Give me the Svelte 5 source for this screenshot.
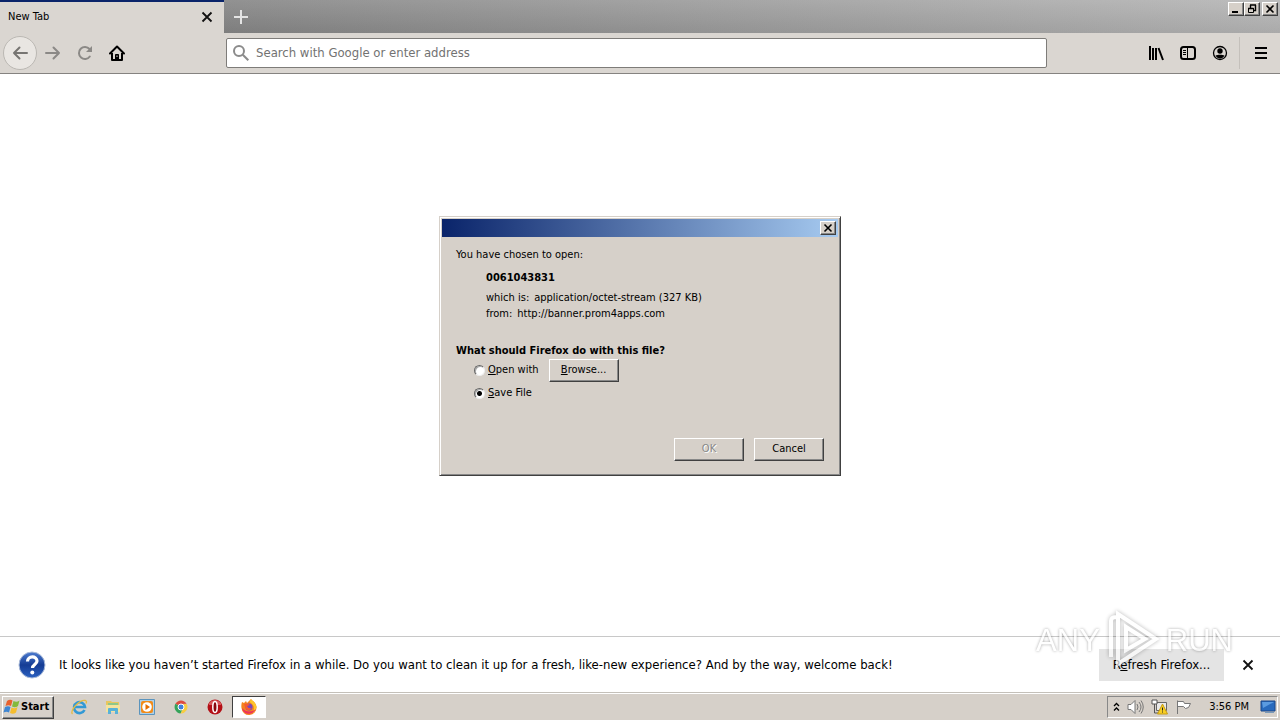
<script lang="ts">
	let address = $state('');
	let choice = $state('save');

	const message =
		'It looks like you haven’t started Firefox in a while. Do you want to clean it up for a fresh, like-new experience? And by the way, welcome back!';
</script>

{#snippet cross(size: number)}
	<svg width={size} height={size} viewBox="0 0 12 12" aria-hidden="true">
		<path d="M1.5 1.5l9 9m0-9l-9 9" fill="none" stroke="#111" stroke-width="1.8" />
	</svg>
{/snippet}

<div class="desktop">
	<div class="browser">
		<header class="tabs">
			<div class="tab">
				<span>New Tab</span>
				<button class="plain" type="button" aria-label="Close tab">{@render cross(12)}</button>
			</div>
			<button class="plain new-tab" type="button" aria-label="New tab">
				<svg width="14" height="14" viewBox="0 0 14 14">
					<path d="M7 0v14M0 7h14" stroke="#e4e4e4" stroke-width="2" />
				</svg>
			</button>
			<div class="window-buttons">
				<button class="caption" type="button" aria-label="Minimize">
					<svg width="10" height="10" viewBox="0 0 10 10"><path d="M1 8h6" stroke="#000" stroke-width="2" /></svg>
				</button>
				<button class="caption" type="button" aria-label="Restore">
					<svg width="10" height="10" viewBox="0 0 10 10" fill="none" stroke="#000">
						<path d="M3 1h6M3.500 1v3M8.500 1v5.500H6.500M1 4.500h5.500" stroke-width="1.4" />
						<path d="M1.500 4v4.500h5V4" />
					</svg>
				</button>
				<button class="caption last" type="button" aria-label="Close">
					<svg width="10" height="10" viewBox="0 0 10 10"><path d="M1.500 1.500l7 7m0-7l-7 7" stroke="#000" stroke-width="1.6" /></svg>
				</button>
			</div>
		</header>

		<nav class="toolbar">
			<div class="nav-group">
				<button class="plain back" type="button" aria-label="Back">
					<svg width="16" height="16" viewBox="0 0 16 16" fill="none" stroke="#777572" stroke-width="2">
						<path d="M15 8H2M7.500 2.500L2 8l5.500 5.500" stroke-linejoin="round" stroke-linecap="round" />
					</svg>
				</button>
				<button class="plain tool" type="button" aria-label="Forward">
					<svg width="16" height="16" viewBox="0 0 16 16" fill="none" stroke="#8b8986" stroke-width="2">
						<path d="M1 8h13M8.500 2.500L14 8l-5.500 5.500" stroke-linejoin="round" stroke-linecap="round" />
					</svg>
				</button>
				<button class="plain tool" type="button" aria-label="Reload">
					<svg width="16" height="16" viewBox="0 0 16 16" fill="none" stroke="#8b8986" stroke-width="2">
						<path d="M12.800 11.500A6 6 0 1 1 12.500 4" stroke-linecap="round" />
						<path d="M15 1v6H9z" fill="#8b8986" stroke="none" />
					</svg>
				</button>
				<button class="plain tool" type="button" aria-label="Home">
					<svg width="16" height="16" viewBox="0 0 16 16" fill="none" stroke="#000" stroke-width="2">
						<path d="M1 8.500L8 1.500l7 7" stroke-linejoin="round" stroke-linecap="round" />
						<path d="M3 8v7h10V8" stroke-linejoin="round" />
						<path d="M6.500 15V9.500h3V15" fill="#000" stroke-width="1" />
						<path d="M8 10.500v1.500" stroke="#dad6d1" stroke-width="1" />
					</svg>
				</button>
			</div>
			<label class="address">
				<svg width="16" height="16" viewBox="0 0 16 16" fill="none" stroke="#8b8b8b" stroke-width="2">
					<circle cx="6" cy="6" r="5" />
					<path d="M9.800 9.800l5.500 5.500" />
				</svg>
				<input
					type="text"
					aria-label="Address"
					placeholder="Search with Google or enter address"
					bind:value={address}
				/>
			</label>
			<div class="tools">
				<button class="plain tool" type="button" aria-label="Library">
					<svg width="16" height="16" viewBox="0 0 16 16" stroke="#000" stroke-width="2">
						<path d="M2 1v14M5 3v12M8 3v12M10.500 3l4.500 12" />
					</svg>
				</button>
				<button class="plain tool" type="button" aria-label="Sidebars">
					<svg width="16" height="16" viewBox="0 0 16 16" fill="none" stroke="#000">
						<rect x="1" y="2" width="14" height="12" rx="2.500" stroke-width="2" />
						<path d="M7.500 2v12M3 5.500h3M3 7.500h3M3 9.500h3" />
					</svg>
				</button>
				<button class="plain tool" type="button" aria-label="Account">
					<svg width="16" height="16" viewBox="0 0 16 16">
						<circle cx="8" cy="8" r="6.500" fill="none" stroke="#000" stroke-width="1.300" />
						<circle cx="8" cy="6" r="2.700" />
						<path d="M3.500 10.500c2-1 7-1 9 0-1 2-2.500 3-4.500 3s-3.500-1-4.500-3z" />
					</svg>
				</button>
				<button class="plain tool menu" type="button" aria-label="Open menu">
					<svg width="12" height="12" viewBox="0 0 12 12" stroke="#000" stroke-width="2">
						<path d="M0 1h12M0 6h12M0 11h12" />
					</svg>
				</button>
			</div>
		</nav>

		<main class="page"></main>

		<div class="notice">
			<svg width="28" height="28" viewBox="0 0 28 28" aria-hidden="true">
				<defs>
					<linearGradient id="help" x1="0" y1="0" x2="0" y2="1">
						<stop offset="0" stop-color="#4d7cd0" />
						<stop offset="0.500" stop-color="#153c94" />
						<stop offset="1" stop-color="#2c62c2" />
					</linearGradient>
				</defs>
				<circle cx="14" cy="14" r="13" fill="url(#help)" stroke="#a9bad8" />
				<path d="M9.500 10.500c0-6 9.500-6 9.500-.5 0 3.500-4.500 3.500-4.500 7" fill="none" stroke="#fff" stroke-width="3.200" />
				<circle cx="14.300" cy="21.500" r="2" fill="#fff" />
			</svg>
			<p>{message}</p>
			<button class="refresh" type="button">R<u>e</u>fresh Firefox...</button>
			<button class="plain dismiss" type="button" aria-label="Close message">{@render cross(12)}</button>
		</div>

		<div class="dialog-layer">
			<div class="dialog" role="dialog" aria-label="Opening 0061043831">
				<div class="titlebar">
					<button class="caption" type="button" aria-label="Close dialog">
						<svg width="10" height="10" viewBox="0 0 10 10"><path d="M1.500 1.500l7 7m0-7l-7 7" stroke="#000" stroke-width="1.6" /></svg>
					</button>
				</div>
				<form class="dialog-body" onsubmit={(e) => e.preventDefault()}>
					<p>You have chosen to open:</p>
					<div class="file">
						<strong>0061043831</strong>
						<div class="detail"><span>which is:</span><span>application/octet-stream (327 KB)</span></div>
						<div class="detail"><span>from:</span><span>http://banner.prom4apps.com</span></div>
					</div>
					<strong>What should Firefox do with this file?</strong>
					<div class="choices">
						<div class="choice">
							<label><input type="radio" name="action" value="open" bind:group={choice} /><span><u>O</u>pen with</span></label>
							<button class="push" type="button"><u>B</u>rowse...</button>
						</div>
						<div class="choice">
							<label><input type="radio" name="action" value="save" bind:group={choice} /><span><u>S</u>ave File</span></label>
						</div>
					</div>
					<div class="actions">
						<button class="push" type="submit" disabled>OK</button>
						<button class="push" type="button">Cancel</button>
					</div>
				</form>
			</div>
		</div>
	</div>

	<footer class="taskbar">
		<button class="start" type="button">
			<svg width="18" height="16" viewBox="0 0 18 16" aria-hidden="true">
				<path d="M4 2c2-1.500 4-1.500 5.500-.5L8 7C6.500 6 4.500 6 2.500 7z" fill="#e8602c" />
				<path d="M10.500 2c2 1 4 1 6-.5L15 7c-2 1.500-4 1.500-6 .5z" fill="#83b93c" />
				<path d="M2 8c2-1 4-1 5.500 0L6 13.500c-1.500-1-3.500-1-5.500 0z" fill="#3f86d2" />
				<path d="M8.500 8.500c2 1 4 1 6-.5L13 13.500c-2 1.500-4 1.500-6 .5z" fill="#f5bd2e" />
			</svg>
			<span>Start</span>
		</button>
		<div class="launchers">
			<button class="plain launcher" type="button" aria-label="Internet Explorer">
				<svg width="18" height="18" viewBox="0 0 18 18" fill="none">
					<path d="M14.500 12A5.500 5.500 0 1 1 15 9H5" stroke="#3299d5" stroke-width="2.600" />
					<path d="M2.500 16C-1 13 10 1 15.500 2.500c1.500.5 1 2 .5 3" stroke="#e4bb43" stroke-width="1.300" />
				</svg>
			</button>
			<button class="plain launcher" type="button" aria-label="Windows Explorer">
				<svg width="18" height="18" viewBox="0 0 18 18">
					<path d="M2 3h5l1 1h7v10H2z" fill="#e8c65f" />
					<path d="M4 5h10v3H4z" fill="#8fc789" />
					<path d="M2 7h14v7H2z" fill="#f5e39d" />
					<path d="M4 16v-5q0-1 1-1h8q1 0 1 1v5h-3v-3H7v3z" fill="#59b2d8" />
				</svg>
			</button>
			<button class="plain launcher" type="button" aria-label="Media Player">
				<svg width="18" height="18" viewBox="0 0 18 18">
					<path d="M1.500 1.500h15v15h-15z" fill="#aed0e8" stroke="#5b94bd" />
					<rect x="3" y="3" width="12" height="12" rx="2" fill="#f28b19" />
					<circle cx="9" cy="9" r="4.800" fill="#fff" />
					<path d="M7.500 6l4.500 3-4.500 3z" fill="#e66d00" />
				</svg>
			</button>
			<button class="plain launcher" type="button" aria-label="Chrome">
				<svg width="18" height="18" viewBox="0 0 18 18">
					<path d="M9 9L3.400 5.800A6.500 6.500 0 0 1 14.600 5.800L9 6z" fill="#dd4b3e" />
					<path d="M9 9L3.400 5.800A6.500 6.500 0 0 0 8.500 15.500L11.500 10z" fill="#35a35a" />
					<path d="M9 6h5.700A6.500 6.500 0 0 1 8.500 15.500L12 9z" fill="#f7cd42" />
					<circle cx="9" cy="9" r="3" fill="#3f80dc" stroke="#fff" />
				</svg>
			</button>
			<button class="plain launcher" type="button" aria-label="Opera">
				<svg width="18" height="18" viewBox="0 0 18 18">
					<circle cx="9" cy="9" r="7.500" fill="#b40f16" />
					<path d="M3 5q6-6 12 0v2H3z" fill="#d9575a" />
					<ellipse cx="9" cy="9" rx="2.200" ry="5.500" fill="#8a070d" stroke="#fff" stroke-width="1.500" />
				</svg>
			</button>
			<button class="plain launcher active" type="button" aria-label="Firefox">
				<svg width="18" height="18" viewBox="0 0 18 18">
					<path d="M2 4l2 1 2-2 1 2 4-4c1 2 5 3 5.500 8A7.500 7.500 0 0 1 1.500 10Q1 7 2 4z" fill="#f58220" />
					<path d="M11 1c1 2 5 3 5.500 8-.5 3-2 5-4 6 3-5 1-9-3-11z" fill="#fdc52c" />
					<path d="M2 10c1 7 11 8 14 1-3 3-10 4-14-1z" fill="#ed345b" />
					<circle cx="9" cy="9" r="3.500" fill="#7948bd" />
					<path d="M4 6q4-1 6 1l-3 1q1 3 5 2-3 4-6 1z" fill="#f75b30" />
				</svg>
			</button>
		</div>
		<div class="tray">
			<svg width="7" height="10" viewBox="0 0 7 10" fill="none" stroke="#000" stroke-width="1.300">
				<path d="M1 4l2.500-2.500L6 4M1 8.500L3.500 6 6 8.500" />
			</svg>
			<svg width="17" height="16" viewBox="0 0 17 16" fill="none" stroke="#777" stroke-width="1">
				<path d="M1 5.500h3l4-4v13l-4-4H1z" fill="#fff" />
				<path d="M10 5q2 3 0 6M12 3q4 5 0 10M14 1.500q4.500 6.500 0 13" />
			</svg>
			<svg width="17" height="16" viewBox="0 0 17 16">
				<path d="M5.500 3.500h10v8h-10z" fill="#e9e9e9" stroke="#666" />
				<path d="M1 1h5v4H1z" fill="#fff" stroke="#555" />
				<path d="M3.500 5v9h5" fill="none" stroke="#555" />
				<path d="M11.500 5l5 10h-10z" fill="#f9cf22" stroke="#c69b12" />
				<path d="M11.500 8.500v3M11.500 12.500v1" stroke="#222" />
			</svg>
			<svg width="17" height="16" viewBox="0 0 17 16" fill="#fff" stroke="#777">
				<path d="M2.500 15V1.500M2.500 2.500h6l1 2h6l-2 4-3 1-2-2h-6z" />
			</svg>
			<time>3:56 PM</time>
			<svg width="16" height="14" viewBox="0 0 16 14">
				<path d="M1 1h14v10H1z" fill="#286abd" stroke="#1a4688" />
				<path d="M2 2h12L3 8z" fill="#5b9be0" />
				<path d="M5 12h9v1H5z" fill="#7b9ab9" />
			</svg>
		</div>
	</footer>

	<div class="watermark" aria-hidden="true">
		<span>ANY</span>
		<svg width="54" height="62" viewBox="0 0 54 62" fill="none" stroke="#fff" stroke-width="4">
			<path d="M5 47V11q0-4 5-4M12 54V4l38 25z" />
			<path d="M20 40V17l19 12z" />
		</svg>
		<span>RUN</span>
	</div>
</div>

<style>
	:global(body) {
		margin: 0;
	}

	.desktop {
		--face: #d6d0c9;
		position: relative;
		display: flex;
		flex-direction: column;
		height: 100vh;
		overflow: hidden;
		background: #fff;
		color: #000;
		font: 11px/16px Tahoma, 'DejaVu Sans Condensed', 'DejaVu Sans', sans-serif;
	}

	button,
	input {
		box-sizing: border-box;
		color: inherit;
		font: inherit;
	}

	p {
		margin: 0;
	}

	svg {
		display: block;
		flex: none;
	}

	.plain {
		display: grid;
		place-items: center;
		border: 0;
		background: none;
		padding: 0;
	}

	.browser {
		position: relative;
		display: flex;
		flex: 1;
		flex-direction: column;
		min-height: 0;
	}

	.tabs {
		display: flex;
		height: 33px;
		background: linear-gradient(rgba(255, 255, 255, 0.1), rgba(0, 0, 0, 0.06)),
			linear-gradient(90deg, #858585 17%, #b5b5b5);
	}

	.tab {
		box-sizing: border-box;
		display: flex;
		align-items: center;
		justify-content: space-between;
		width: 224px;
		border-top: 2px solid #0a246a;
		background: #dad6d1;
		padding: 0 11px 2px 8px;
	}

	.new-tab {
		width: 34px;
	}

	.window-buttons {
		display: flex;
		margin: 2px 2px 0 auto;
	}

	.caption {
		display: grid;
		place-items: center;
		width: 16px;
		height: 14px;
		border: 1px solid;
		border-color: #fff #404040 #404040 #fff;
		background: var(--face);
		box-shadow: inset -1px -1px #888;
		padding: 0;
	}

	.caption.last {
		margin-left: 2px;
	}

	.toolbar {
		box-sizing: border-box;
		display: flex;
		align-items: center;
		height: 41px;
		border-bottom: 1px solid #858380;
		background: #dad6d1;
	}

	.nav-group {
		display: flex;
		align-items: center;
		width: 226px;
		padding-left: 3px;
		box-sizing: border-box;
	}

	.back {
		width: 34px;
		height: 34px;
		border: 1px solid #bbb8b3;
		border-radius: 50%;
		background: #e9e6e2;
	}

	.tool {
		width: 32px;
		height: 32px;
	}

	.address {
		box-sizing: border-box;
		display: flex;
		flex: 1;
		align-items: center;
		gap: 7px;
		height: 30px;
		border: 1px solid #7e7c79;
		border-radius: 2px;
		background: #fff;
		padding: 0 6px;
	}

	.address input {
		flex: 1;
		min-width: 0;
		border: 0;
		outline: 0;
		background: none;
		padding: 0;
		font-size: 13px;
	}

	.address input::placeholder {
		color: #727272;
		opacity: 1;
	}

	.tools {
		display: flex;
		justify-content: flex-end;
		width: 233px;
	}

	.menu {
		width: 41px;
		margin-left: 3px;
		border-left: 1px solid #c4c0bb;
		padding-left: 2px;
	}

	.page {
		flex: 1;
	}

	.notice {
		box-sizing: border-box;
		display: flex;
		align-items: center;
		height: 56px;
		border-top: 1px solid #c8c8c8;
		padding: 0 20px 0 18px;
		font-size: 13px;
	}

	.notice p {
		flex: 1;
		margin-left: 13px;
		white-space: nowrap;
	}

	.refresh {
		width: 125px;
		height: 32px;
		border: 0;
		background: #e4e4e4;
		padding: 0;
		white-space: nowrap;
	}

	.dismiss {
		width: 24px;
		height: 24px;
		margin-left: 12px;
	}

	.dialog-layer {
		position: absolute;
		inset: 0;
		display: grid;
		place-items: center;
		padding-bottom: 1px;
	}

	.dialog {
		box-sizing: border-box;
		width: 402px;
		border: 1px solid;
		border-color: #d6d0c9 #404040 #404040 #d6d0c9;
		background: var(--face);
		box-shadow: inset 1px 1px #fff, inset -1px -1px #888;
		padding: 2px;
	}

	.titlebar {
		display: flex;
		align-items: center;
		justify-content: flex-end;
		height: 18px;
		background: linear-gradient(90deg, #0a246a, #a6caf0);
		padding-right: 2px;
	}

	.dialog-body {
		padding: 10px 14px 12px 14px;
	}

	.dialog strong {
		display: block;
	}

	.file {
		margin: 7px 0 21px 30px;
	}

	.file strong {
		margin-bottom: 4px;
	}

	.detail {
		display: flex;
		gap: 5px;
	}

	.choices {
		margin-left: 18px;
	}

	.choice {
		display: flex;
		align-items: center;
		gap: 10px;
		height: 23px;
	}

	.choice label {
		display: flex;
		align-items: center;
		gap: 3px;
	}

	.choice input {
		appearance: none;
		width: 11px;
		height: 11px;
		margin: 0;
		border: 1px solid;
		border-color: #666 #eee #eee #666;
		border-radius: 50%;
		background: #fff;
		box-shadow: inset 1px 1px #aaa;
	}

	.choice input:checked {
		background: radial-gradient(circle, #000 0 2px, #fff 3px);
	}

	.push {
		width: 70px;
		height: 23px;
		border: 1px solid;
		border-color: #fff #404040 #404040 #fff;
		background: var(--face);
		box-shadow: inset -1px -1px #888;
		padding: 0;
	}

	.push:disabled {
		color: #888;
		text-shadow: 1px 1px #fff;
	}

	.actions {
		display: flex;
		justify-content: flex-end;
		gap: 10px;
		margin-top: 33px;
	}

	.taskbar {
		box-sizing: border-box;
		display: flex;
		align-items: center;
		height: 28px;
		border-top: 1px solid #c4c0b9;
		background: var(--face);
		box-shadow: inset 0 1px #fff;
		padding: 2px 2px 1px;
	}

	.start {
		display: flex;
		align-items: center;
		width: 52px;
		height: 23px;
		border: 1px solid;
		border-color: #fff #404040 #404040 #fff;
		background: var(--face);
		box-shadow: inset -1px -1px #888;
		padding: 0;
		font-weight: 700;
	}

	.launchers {
		display: flex;
		margin-left: 8px;
	}

	.launcher {
		width: 34px;
		height: 22px;
	}

	.active {
		border: 1px solid;
		border-color: #404040 #fff #fff #404040;
		background: #fff;
	}

	.tray {
		box-sizing: border-box;
		display: flex;
		align-items: center;
		gap: 7px;
		height: 22px;
		margin-left: auto;
		border: 1px solid;
		border-color: #888 #fff #fff #888;
		padding: 0 1px 0 5px;
	}

	.tray time {
		margin: 0 4px 0 10px;
	}

	.watermark {
		position: absolute;
		right: 47px;
		bottom: 48px;
		display: flex;
		align-items: center;
		gap: 6px;
		color: #fff;
		font: 31px/62px 'Liberation Sans Narrow', 'Liberation Sans', sans-serif;
		text-shadow: 0 0 3px rgba(0, 0, 0, 0.5);
		opacity: 0.7;
		pointer-events: none;
	}

	.watermark svg {
		filter: drop-shadow(0 0 2px rgba(0, 0, 0, 0.4));
	}
</style>
